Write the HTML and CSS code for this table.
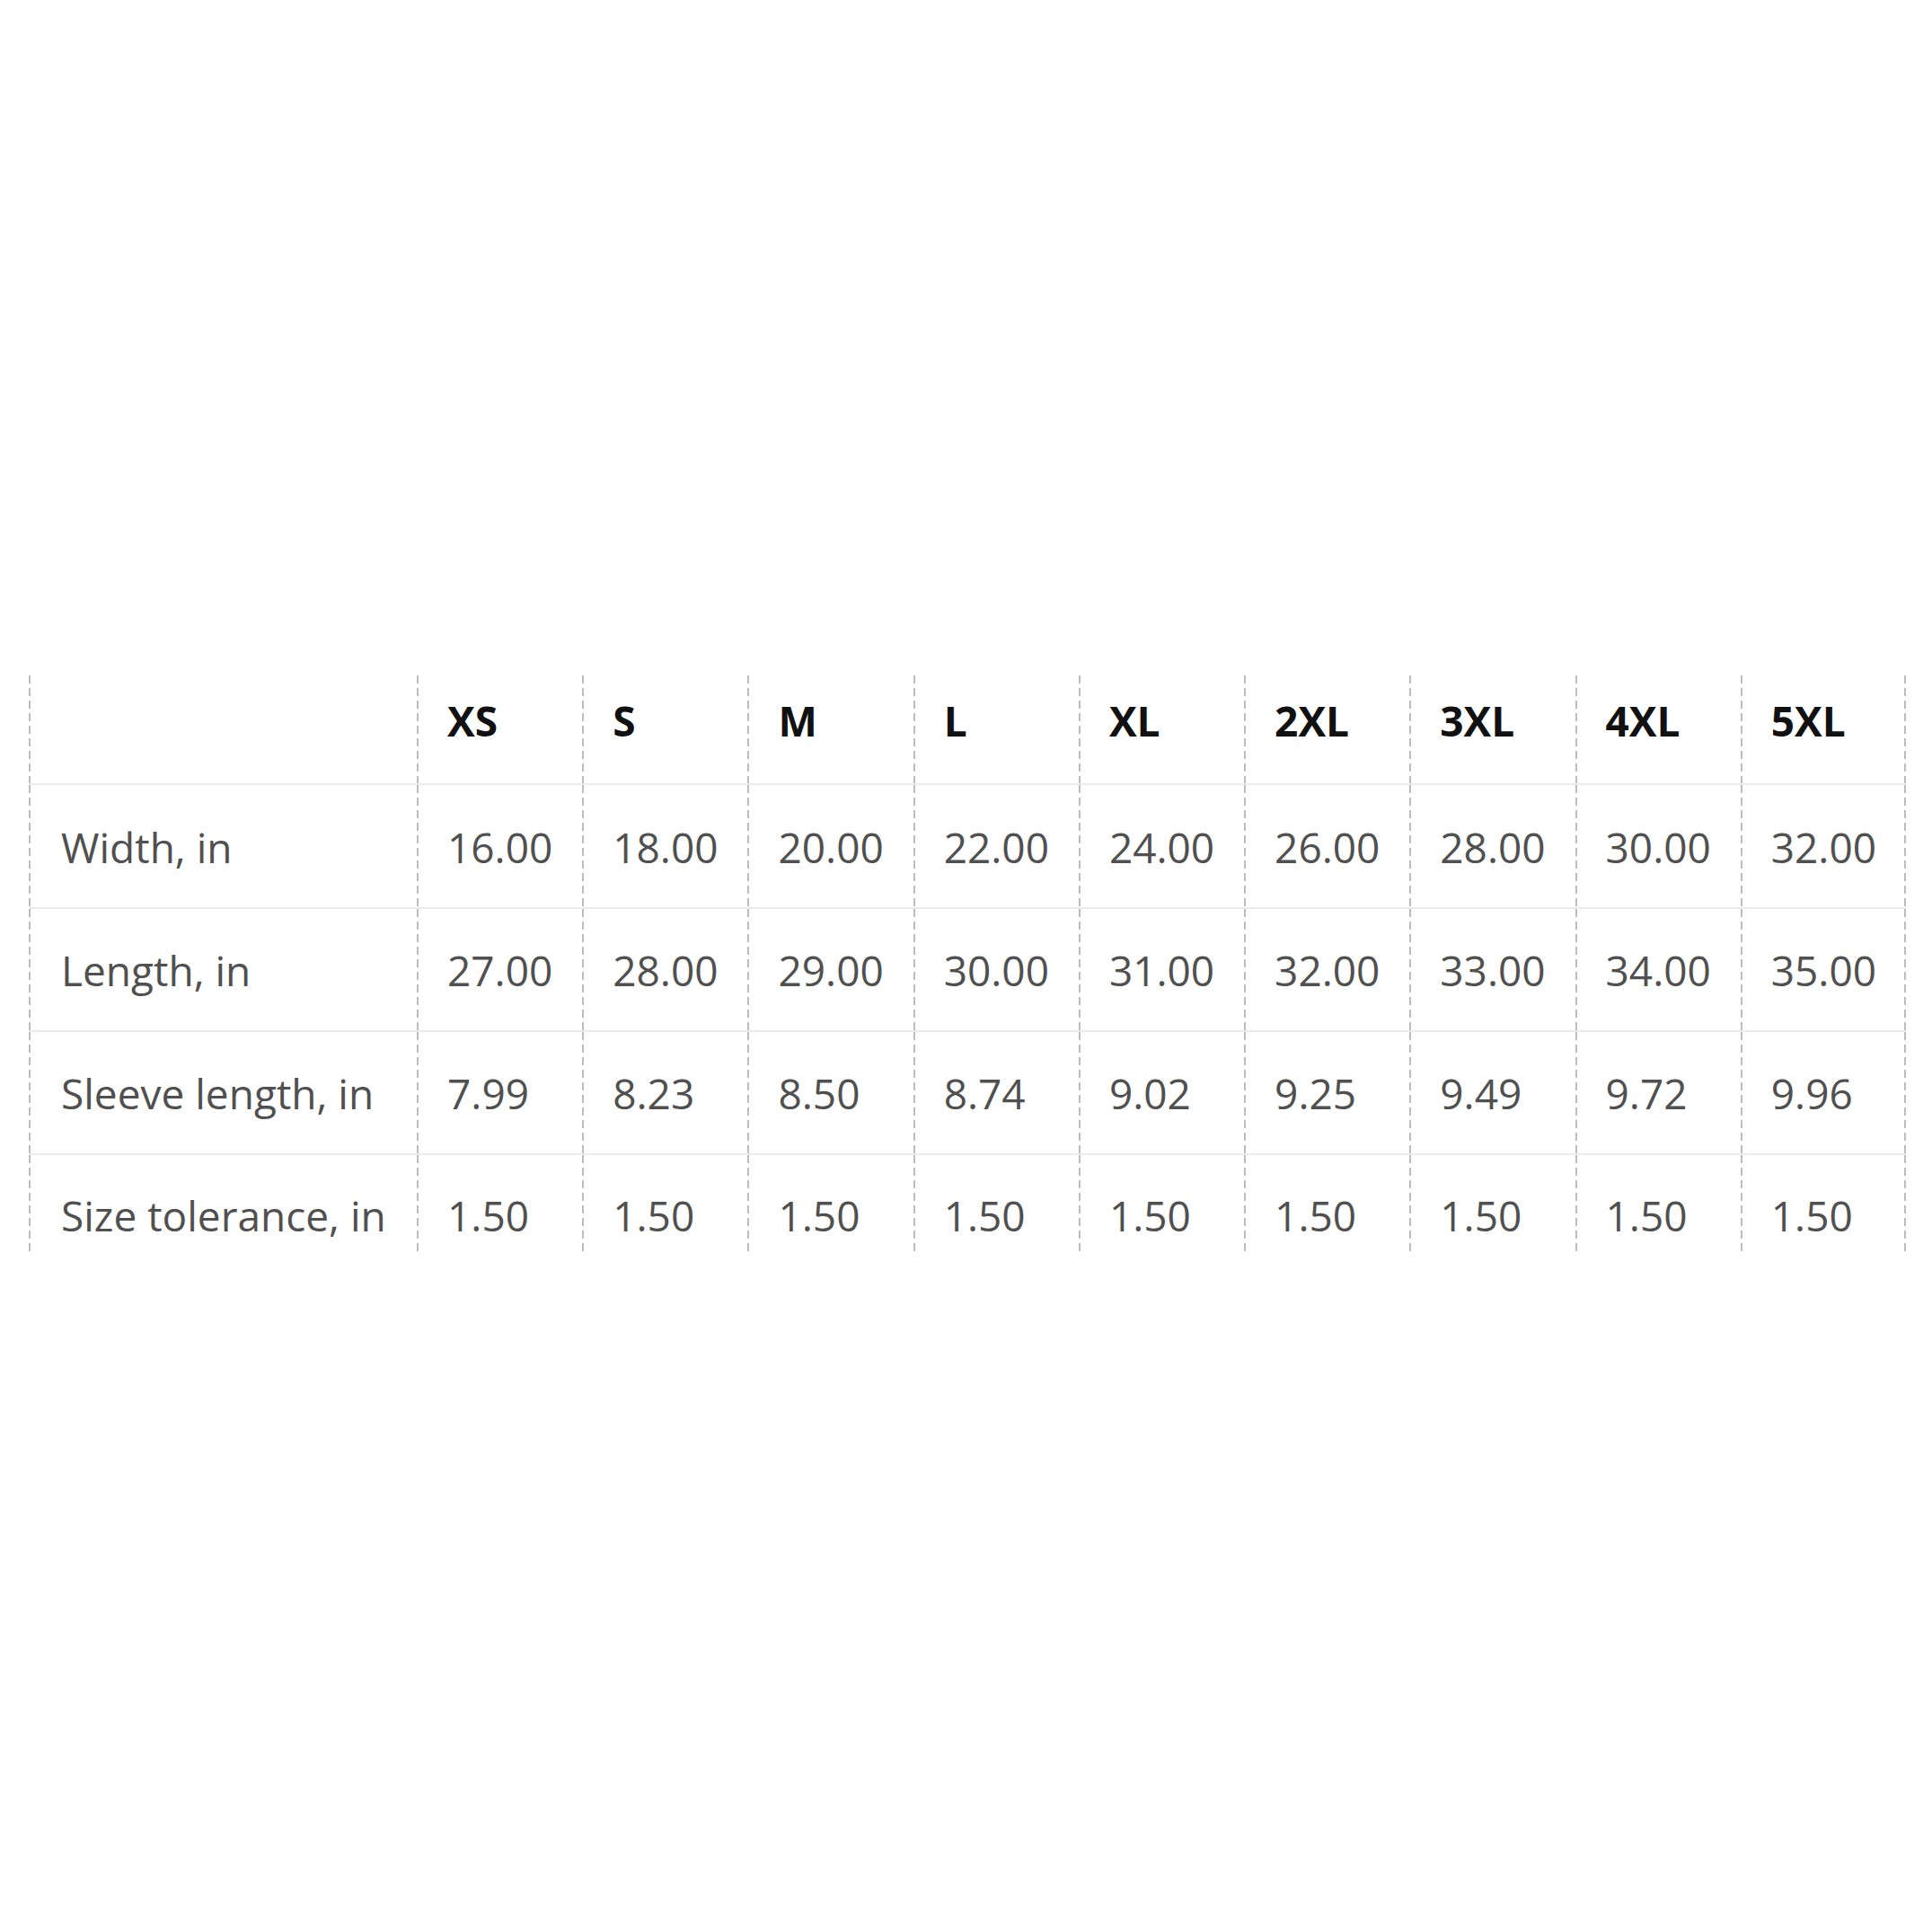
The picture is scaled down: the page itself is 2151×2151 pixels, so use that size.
FILE: index.html
```html
<!DOCTYPE html>
<html lang="en">
<head>
<meta charset="utf-8">
<title>Size chart</title>
<link rel="stylesheet" href="styles.css">
</head>
<body>
<div class="page">
  <table class="size-table">
    <colgroup>
      <col class="col-label">
      <col><col><col><col><col><col><col><col><col>
    </colgroup>
    <thead>
      <tr>
        <th class="label"></th>
        <th>XS</th><th>S</th><th>M</th><th>L</th><th>XL</th><th>2XL</th><th>3XL</th><th>4XL</th><th class="last">5XL</th>
      </tr>
    </thead>
    <tbody>
      <tr class="first">
        <td class="label">Width, in</td>
        <td>16.00</td><td>18.00</td><td>20.00</td><td>22.00</td><td>24.00</td><td>26.00</td><td>28.00</td><td>30.00</td><td class="last">32.00</td>
      </tr>
      <tr>
        <td class="label">Length, in</td>
        <td>27.00</td><td>28.00</td><td>29.00</td><td>30.00</td><td>31.00</td><td>32.00</td><td>33.00</td><td>34.00</td><td class="last">35.00</td>
      </tr>
      <tr>
        <td class="label">Sleeve length, in</td>
        <td>7.99</td><td>8.23</td><td>8.50</td><td>8.74</td><td>9.02</td><td>9.25</td><td>9.49</td><td>9.72</td><td class="last">9.96</td>
      </tr>
      <tr class="final">
        <td class="label">Size tolerance, in</td>
        <td>1.50</td><td>1.50</td><td>1.50</td><td>1.50</td><td>1.50</td><td>1.50</td><td>1.50</td><td>1.50</td><td class="last">1.50</td>
      </tr>
    </tbody>
  </table>
</div>
</body>
</html>
```
FILE: styles.css
```css
html, body {
  margin: 0;
  padding: 0;
  background: #ffffff;
}

.page {
  padding: 752px 0 0 32px;
}

.size-table {
  width: 2090px;
  table-layout: fixed;
  border-collapse: separate;
  border-spacing: 0;
  font-family: "Open Sans", "Noto Sans", sans-serif;
  font-size: 46px;
  line-height: 60px;
}

.col-label {
  width: 432px;
}

.size-table th,
.size-table td {
  text-align: left;
  white-space: nowrap;
  padding: 38px 0 37px 34px;
  border-bottom: 2px solid #ebebeb;
  background-image: repeating-linear-gradient(to bottom, #bdbdbd 0 9px, transparent 9px 14px);
  background-size: 2px 100%;
  background-repeat: no-repeat;
  background-position: left top;
}

.size-table th.last,
.size-table td.last {
  background-image:
    repeating-linear-gradient(to bottom, #bdbdbd 0 9px, transparent 9px 14px),
    repeating-linear-gradient(to bottom, #bdbdbd 0 9px, transparent 9px 14px);
  background-size: 2px 100%, 2px 100%;
  background-position: left top, right top;
}

.size-table th {
  color: #111111;
  font-weight: 700;
  padding-top: 20px;
  padding-bottom: 40px;
}

.size-table td {
  color: #505050;
  font-weight: 400;
}

.size-table td.label {
  padding-left: 36px;
}

.size-table .first td {
  padding-top: 39px;
  padding-bottom: 37px;
}

.size-table .final td {
  border-bottom: 0;
  padding-top: 37px;
  padding-bottom: 13px;
}
```
